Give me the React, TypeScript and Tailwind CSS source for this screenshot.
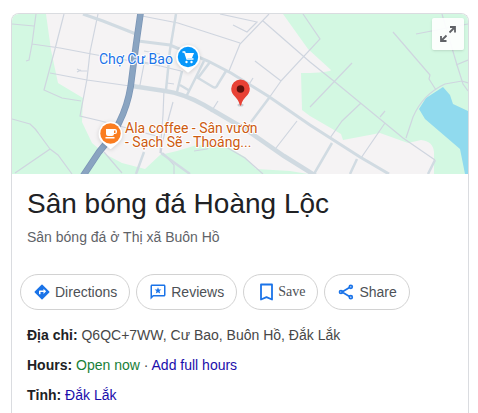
import type { ReactNode } from "react";

function MapView() {
  return (
    <svg viewBox="12 14 456 160" preserveAspectRatio="xMidYMid slice" className="block h-[160px] w-full" role="img" aria-label="Map of Cư Bao">
      <rect x="-500" y="14" width="1500" height="160" fill="#f5f3f4" />
      <g fill="#d3f8e2">
        <path d="M12 14H46L51 50L58 83L83 98L82 122L92 143L105 154L122 163L145 169L160 155L177 151L197 145L228 147L245 157L256 169L290 171L308 174H12Z" />
        <path d="M283 14L308 49L331 70Q331 72 310 73H301L302 110L310 116L341 134L343 140L380 133L408 143L421 140Q433 141 434 152V174H468V14Z" />
      </g>
      <path fill="#90daee" d="M443 87L450 95L453 104L468 111V174H465L460 149L425 119L419 109L426 98Z" />
      <g fill="none" stroke="#cfd5df" strokeWidth="1.2">
        <path d="M12 24L34 26M36 14L32 44L29 60L26 61M32 44L60 48L97 55L160 66M64 14L55 49L44 90L62 98L81 101M98 14L90 52L87 79L80 116L101 121L160 137M50 73L87 80L130 86M77 69L81 71L87 71M77 72L81 70" />
        <path d="M12 119L30 124Q36 129 39 134L50 149L15 173M50 149L58 155L72 174M104 152L122 173M144 51L160 54M144 64L140 85M144 62L181 71M164 90L163 115L160 153M173 102L167 124L163 140L161 153" />
        <path d="M142 16L178 23L240 43M220 14L257 22L247 32L233 25M269 14L240 44L229 71M255 61L281 81L320 39L303 14M263 21L310 62L335 82L403 138L435 160M253 78L248 86M218 101L211 112M167 83L174 84M281 81L269 98M310 107L352 63M330 138L342 121L361 103M380 117L385 111M385 123L361 158M297 121L276 148M393 32L430 75L429 79L436 90M406 138L413 117Q423 94 445 84L462 81L468 83M416 34L468 24M442 14L457 65L463 84L468 91M456 65L468 60M163 153L174 165L174 174M194 151L207 149L214 140L245 158L263 174" />
      </g>
      <g fill="none" stroke="#d1dbe2" strokeWidth="3">
        <path d="M83 14L103 21L136 34M138 41L170 45L208 61L231 73L268 96L310 125L360 157L389 174" />
        <path strokeWidth="2.5" d="M176 14L170 50L166 90M182 71L177 92M204 61L186 97M210 62L198 78L213 87Q216 89 218 84L226 71M180 85L190 91M269 98L251 122M332 143L314 174M357 159L350 174M435 160L428 174M144 152L136 174M161 153L190 174" />
      </g>
      <path d="M132 86L165 91Q182 93 204 105L245 129L284 156L316 176" fill="none" stroke="#d0dae1" strokeWidth="4.5" />
      <path d="M141 10L136 45L132 76Q130 97 123 114Q115 134 99 152L83 176" fill="none" stroke="#7c96b6" strokeWidth="6.6" />
      <path d="M141 10L136 45L132 76Q130 97 123 114Q115 134 99 152L83 176" fill="none" stroke="#8aa4c1" strokeWidth="5" />

      <g fill="#1a73e8" stroke="#ffffff" strokeWidth="2" strokeLinejoin="round" className="font-['Roboto',sans-serif] text-[14px]">
        <text x="99" y="64" style={{ paintOrder: "stroke" }}>Chợ Cư Bao</text>
        <text fill="#cd5b10" style={{ paintOrder: "stroke" }}>
          <tspan x="125" y="133">Ala coffee - Sân vườn</tspan>
          <tspan x="125" y="147">- Sạch Sẽ - Thoáng...</tspan>
        </text>
      </g>

      <g className="drop-shadow-sm">
        <path fill="#fff" d="M188 45a12.300 12.300 0 0 1 7 22l-6 5q-1 1-2 0l-6-5a12.300 12.300 0 0 1 7-22Z" />
        <circle cx="188" cy="57" r="10.200" fill="#0797fa" />
        <path d="M182.500 52h2.200l2.300 7h6.500" fill="none" stroke="#fff" strokeWidth="1.300" />
        <path fill="#fff" d="M185 53h9l-2 5h-5.500Z" />
        <circle cx="186.500" cy="62" r="1.200" fill="#fff" />
        <circle cx="191.500" cy="62" r="1.200" fill="#fff" />
      </g>
      <g className="drop-shadow-sm">
        <path fill="#fff" d="M110.500 121.500a12.300 12.300 0 0 1 7 22l-6 5q-1 1-2 0l-6-5a12.300 12.300 0 0 1 7-22Z" />
        <circle cx="110.500" cy="133.500" r="10.200" fill="#fa7d20" />
        <path fill="#fff" fillRule="evenodd" d="M106 129h9q2 0 2 2v1q0 2-2 2h-1q0 2-2 2h-4q-2 0-2-2Zm8 1.500v2.500h1.500v-2.500ZM105.500 137h9v1.500h-9Z" />
      </g>
      <ellipse cx="240.500" cy="105" rx="3" ry="1.500" fill="#c8cbd0" />
      <path fill="#e84135" d="M240.500 79.500a9.300 9.300 0 0 1 9.300 9.300c0 7-7 8.500-8.500 16q-.8 2-1.600 0c-1.500-7.500-8.500-9-8.500-16a9.300 9.300 0 0 1 9.300-9.300Z" />
      <circle cx="240.500" cy="89" r="3.800" fill="#5e110c" />
    </svg>
  );
}

function DirectionsIcon() {
  return (
    <svg viewBox="0 0 24 24" className="size-[18px] shrink-0 fill-[#1a73e8]" aria-hidden="true">
      <path d="M21.710 11.290l-9-9a1 1 0 0 0-1.410 0l-9 9a1 1 0 0 0 0 1.410l9 9a1 1 0 0 0 1.410 0l9-9a1 1 0 0 0 0-1.410zM14 14.500V12h-4v3H8v-4c0-.550.450-1 1-1h5V7.500l3.500 3.500-3.500 3.500z" />
    </svg>
  );
}

function ReviewsIcon() {
  return (
    <svg viewBox="0 0 24 24" className="size-[18px] shrink-0 fill-[#1a73e8]" aria-hidden="true">
      <path d="M20 2H4C2.900 2 2 2.900 2 4v18l4-4h14c1.100 0 2-.9 2-2V4c0-1.100-.9-2-2-2zm0 14H5.200L4 17.200V4h16v12z" />
      <path d="M12 5.500l1.200 3 3.300.2-2.500 2.100.9 3.200-2.900-1.800L9.100 14l.9-3.200-2.500-2.100 3.300-.2z" />
    </svg>
  );
}

function SaveIcon() {
  return (
    <svg viewBox="0 0 18 18" className="size-[18px] shrink-0 fill-none stroke-[#1a73e8] stroke-[1.8px]" aria-hidden="true">
      <path d="M5 1.500h11v15L10.500 14.200 5 16.500Z" strokeLinejoin="round" />
    </svg>
  );
}

function ShareIcon() {
  return (
    <svg viewBox="0 0 18 18" className="size-[18px] shrink-0 fill-none stroke-[#1a73e8] stroke-[1.7px]" aria-hidden="true">
      <path d="M12.500 4.500L5 9l7.500 4.500" />
      <circle cx="13.800" cy="3.800" r="1.500" />
      <circle cx="4" cy="9" r="1.500" />
      <circle cx="13.800" cy="14.200" r="1.500" />
    </svg>
  );
}

function Action({ icon, label, className = "" }: { icon: ReactNode; label: string; className?: string }) {
  return (
    <button type="button" className={`flex h-9 items-center gap-1 rounded-full border border-[#d2d2d2] px-3 text-[#4d5156] ${className}`}>
      {icon}
      <span>{label}</span>
    </button>
  );
}

export default function App() {
  return (
    <main className="flex min-h-screen flex-col bg-white pt-[13px] pr-[9px] pl-[11px] font-['Liberation_Sans',Arial,sans-serif] text-sm text-[#474747]">
      <article className="flex-1 rounded-t-lg border border-b-0 border-[#dadce0]">
        <div className="relative overflow-hidden rounded-t-[7px]">
          <MapView />
          <button type="button" aria-label="Expand map" className="absolute top-1 right-1 flex size-8 items-center justify-center rounded-[2px] bg-white/90 shadow">
            <svg viewBox="0 0 18 18" className="size-[18px] fill-none stroke-[#606367] stroke-[1.8px]" aria-hidden="true">
              <path d="M11 2H16v5.500M16 2l-5.500 5.500M2 11V16h5.500M2 16l5.500-5.500" />
            </svg>
          </button>
        </div>
        <header className="px-[15px] pt-3">
          <h1 className="text-[28px] leading-9 text-[#202124]">Sân bóng đá Hoàng Lộc</h1>
          <p className="mt-[5px] text-[#5f6368]">Sân bóng đá ở Thị xã Buôn Hồ</p>
        </header>
        <div className="mt-[27px] flex gap-1.5 px-2">
          <Action icon={<DirectionsIcon />} label="Directions" />
          <Action icon={<ReviewsIcon />} label="Reviews" />
          <Action icon={<SaveIcon />} label="Save" className="font-['Liberation_Serif',serif]" />
          <Action icon={<ShareIcon />} label="Share" />
        </div>
        <div className="flex flex-col gap-2.5 px-[15px] pt-[15px]">
          <p><b className="text-[#202124]">Địa chỉ:</b> Q6QC+7WW, Cư Bao, Buôn Hồ, Đắk Lắk</p>
          <p>
            <b className="text-[#202124]">Hours:</b> <span className="text-[#188038]">Open now</span> · <a href="#hours" className="text-[#1a0dab]">Add full hours</a>
          </p>
          <p><b className="text-[#202124]">Tỉnh:</b> <a href="#province" className="text-[#1a0dab]">Đắk Lắk</a></p>
        </div>
      </article>
    </main>
  );
}
